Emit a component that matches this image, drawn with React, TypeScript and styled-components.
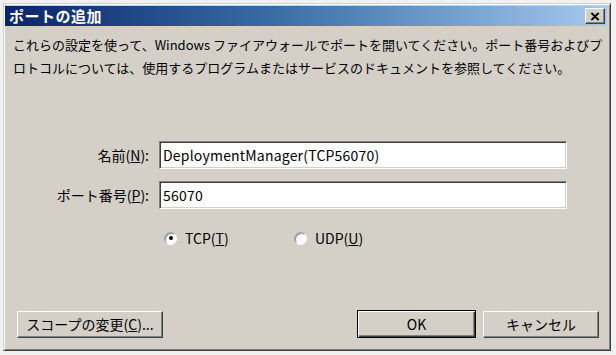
import React from "react";
import styled, { createGlobalStyle } from "styled-components";

const Global = createGlobalStyle`
  html, body { margin: 0; padding: 0; background: #f1f1f1; }
  body { font-family: "Noto Sans CJK JP", "Liberation Sans", sans-serif; }
  * { box-sizing: border-box; }
`;

const Page = styled.div`
  width: 616px;
  height: 355px;
  padding: 3px 0 0 3px;
`;

const Window = styled.div`
  width: 608px;
  height: 348px;
  background: #d4d0c8;
  border: 1px solid;
  border-color: #d4d0c8 #404040 #404040 #d4d0c8;
  display: flex;
  flex-direction: column;
  box-shadow: inset 1px 1px 0 #ffffff, inset -1px -1px 0 #808080;
  padding: 1px 3px 3px 1px;
`;

const TitleBar = styled.div`
  height: 20px;
  margin-top: 1px;
  background: linear-gradient(to right, #0a246a 0%, #3a6ea5 45%, #a6caf0 100%);
  display: flex;
  align-items: center;
  justify-content: space-between;
  padding: 0 2px 0 4px;
`;

const Title = styled.span`
  color: #ffffff;
  font-weight: bold;
  font-size: 15px;
  letter-spacing: 0.5px;
  line-height: 20px;
`;

const CloseButton = styled.div`
  width: 20px;
  height: 16px;
  background: #d4d0c8;
  border: 1px solid;
  border-color: #ffffff #404040 #404040 #ffffff;
  box-shadow: inset -1px -1px 0 #808080;
  display: flex;
  align-items: center;
  justify-content: center;
`;

const Body = styled.div`
  flex: 1;
  display: flex;
  flex-direction: column;
  padding: 7px 0 0 8px;
`;

const Description = styled.p`
  margin: 0;
  font-size: 13px;
  line-height: 23px;
  color: #000;
  white-space: nowrap;
`;

const Form = styled.div`
  margin-top: 62px;
  display: grid;
  grid-template-columns: 136px 408px;
  column-gap: 10px;
  row-gap: 12px;
  align-items: center;
`;

const Label = styled.label`
  font-size: 14px;
  text-align: right;
  color: #000;
`;

const U = styled.span`
  text-decoration: underline;
`;

const Input = styled.div`
  height: 28px;
  background: #ffffff;
  border: 1px solid;
  border-color: #808080 #ffffff #ffffff #808080;
  box-shadow: inset 1px 1px 0 #404040, inset -1px -1px 0 #d4d0c8;
  font-size: 14px;
  line-height: 26px;
  padding-left: 3px;
  color: #000;
  white-space: nowrap;
  letter-spacing: 0.2px;
`;

const RadioRow = styled.div`
  display: flex;
  margin-top: 19px;
  padding-left: 151px;
`;

const RadioItem = styled.div<{ $w: number }>`
  display: flex;
  align-items: center;
  width: ${(p) => p.$w}px;
  font-size: 14px;
  color: #000;
  gap: 8px;
`;

const RadioCircle = styled.span<{ $checked?: boolean }>`
  width: 13px;
  height: 13px;
  border-radius: 50%;
  border: 1px solid;
  border-color: #a0a0a0 #ffffff #ffffff #a0a0a0;
  background: #ffffff;
  display: flex;
  align-items: center;
  justify-content: center;
  box-shadow: inset 1px 1px 0 #909090;
  &::after {
    content: "";
    width: 4px;
    height: 4px;
    border-radius: 50%;
    background: ${(p) => (p.$checked ? "#000" : "transparent")};
  }
`;

const ButtonRow = styled.div`
  margin-top: auto;
  margin-bottom: 9px;
  margin-right: 8px;
  display: flex;
  align-items: center;
  padding-left: 4px;
`;

const Button = styled.div<{ $w: number; $default?: boolean }>`
  width: ${(p) => p.$w}px;
  height: ${(p) => (p.$default ? 28 : 27)}px;
  background: #d4d0c8;
  border: 1px solid;
  border-color: ${(p) =>
    p.$default ? "#000" : "#ffffff #404040 #404040 #ffffff"};
  box-shadow: ${(p) =>
    p.$default
      ? "inset 1px 1px 0 #ffffff, inset -1px -1px 0 #404040, inset -2px -2px 0 #808080"
      : "inset -1px -1px 0 #808080"};
  display: flex;
  align-items: center;
  justify-content: center;
  font-size: 14px;
  color: #000;
`;

const Spacer = styled.div`
  flex: 1;
`;

const Gap = styled.div`
  width: 7px;
`;

export default function App() {
  return (
    <>
      <Global />
      <Page>
        <Window>
          <TitleBar>
            <Title>ポートの追加</Title>
            <CloseButton>
              <svg width="10" height="9" viewBox="0 0 10 9">
                <path d="M1 1 L8 8 M2 1 L9 8 M8 1 L1 8 M9 1 L2 8" stroke="#000" strokeWidth="1.2" />
              </svg>
            </CloseButton>
          </TitleBar>
          <Body>
            <Description>
              これらの設定を使って、Windows ファイアウォールでポートを開いてください。ポート番号およびプ
              <br />
              ロトコルについては、使用するプログラムまたはサービスのドキュメントを参照してください。
            </Description>
            <Form>
              <Label>
                名前(<U>N</U>):
              </Label>
              <Input>DeploymentManager(TCP56070)</Input>
              <Label>
                ポート番号(<U>P</U>):
              </Label>
              <Input>56070</Input>
            </Form>
            <RadioRow>
              <RadioItem $w={130}>
                <RadioCircle $checked />
                <span>
                  TCP(<U>T</U>)
                </span>
              </RadioItem>
              <RadioItem $w={120}>
                <RadioCircle />
                <span>
                  UDP(<U>U</U>)
                </span>
              </RadioItem>
            </RadioRow>
            <ButtonRow>
              <Button $w={146}>
                スコープの変更(<U>C</U>)...
              </Button>
              <Spacer />
              <Button $w={119} $default>
                OK
              </Button>
              <Gap />
              <Button $w={116}>キャンセル</Button>
            </ButtonRow>
          </Body>
        </Window>
      </Page>
    </>
  );
}
